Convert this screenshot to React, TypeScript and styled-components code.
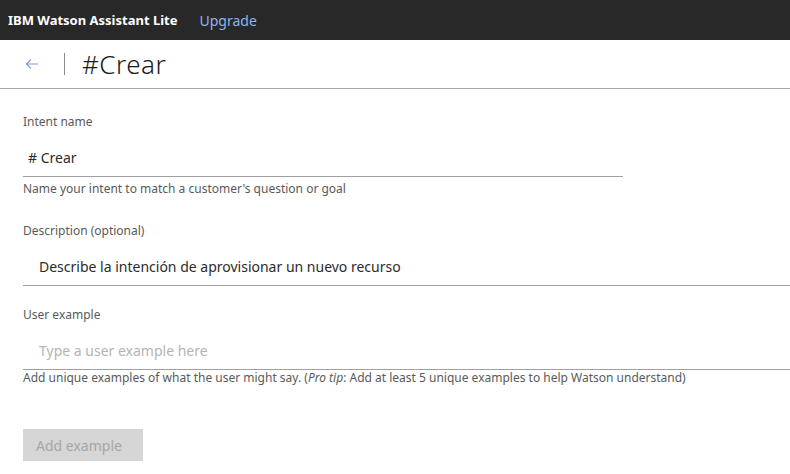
import React from 'react';
import styled, { createGlobalStyle } from 'styled-components';

const GlobalStyle = createGlobalStyle`
  html, body {
    margin: 0;
    padding: 0;
    background: #ffffff;
    font-family: 'Noto Sans', 'Open Sans', sans-serif;
  }
`;

const S = {
  Page: styled.div`
    width: 790px;
    height: 474px;
    overflow: hidden;
    background: #ffffff;
  `,
  TopBar: styled.header`
    height: 40px;
    background: #282828;
    display: flex;
    align-items: center;
    padding-left: 8px;
    gap: 22px;
  `,
  Brand: styled.span`
    color: #ffffff;
    font-size: 13px;
    font-weight: 700;
  `,
  Upgrade: styled.a`
    color: #8fb4ec;
    font-size: 14px;
    text-decoration: none;
  `,
  TitleRow: styled.div`
    height: 48px;
    display: flex;
    align-items: center;
    border-bottom: 1px solid #a8a8a8;
    padding-left: 23px;
  `,
  BackButton: styled.button`
    border: none;
    background: none;
    padding: 0;
    width: 18px;
    height: 18px;
    display: flex;
    align-items: center;
    justify-content: center;
    cursor: pointer;
  `,
  Divider: styled.span`
    width: 1px;
    height: 22px;
    background: #8c8c8c;
    margin: 0 17px 0 23px;
  `,
  Title: styled.h1`
    margin: 0;
    font-size: 26px;
    font-weight: 300;
    color: #1a1a1a;
    letter-spacing: 0.5px;
  `,
  Form: styled.div`
    padding: 25px 0 0 23px;
    display: flex;
    flex-direction: column;
  `,
  Field: styled.div<{ width?: string; gap?: number }>`
    width: ${({ width }) => width || 'auto'};
    margin-bottom: ${({ gap }) => gap ?? 0}px;
  `,
  Label: styled.div`
    font-size: 12px;
    color: #5a5a5a;
    line-height: 16px;
  `,
  Input: styled.div<{ indent: number; placeholder?: boolean }>`
    height: 37px;
    margin-top: 9px;
    display: flex;
    align-items: center;
    padding-left: ${({ indent }) => indent}px;
    border-bottom: 1px solid #a0a0a0;
    font-size: 14px;
    color: ${({ placeholder }) => (placeholder ? '#b4b4b4' : '#2b2b2b')};
  `,
  Helper: styled.div<{ offset: number }>`
    font-size: 12px;
    color: #5a5a5a;
    line-height: 16px;
    margin-top: ${({ offset }) => offset}px;
    white-space: nowrap;
  `,
  Tip: styled.em`
    font-style: italic;
  `,
  AddButton: styled.button`
    margin-top: 43px;
    width: 120px;
    height: 32px;
    border: none;
    background: #d6d6d6;
    color: #a6a6a6;
    font-family: inherit;
    font-size: 14px;
    text-align: left;
    padding: 0 13px;
  `,
};

const BackArrow = () => (
  <svg width="16" height="16" viewBox="0 0 16 16" fill="none">
    <path d="M14 8H2.5M7 3.5L2.5 8L7 12.5" stroke="#7f9cc8" strokeWidth="1.1" />
  </svg>
);

const App = () => (
  <S.Page>
    <GlobalStyle />
    <S.TopBar>
      <S.Brand>IBM Watson Assistant Lite</S.Brand>
      <S.Upgrade>Upgrade</S.Upgrade>
    </S.TopBar>
    <S.TitleRow>
      <S.BackButton>
        <BackArrow />
      </S.BackButton>
      <S.Divider />
      <S.Title>#Crear</S.Title>
    </S.TitleRow>
    <S.Form>
      <S.Field width="600px" gap={26}>
        <S.Label>Intent name</S.Label>
        <S.Input indent={5}># Crear</S.Input>
        <S.Helper offset={4}>Name your intent to match a customer's question or goal</S.Helper>
      </S.Field>
      <S.Field gap={21}>
        <S.Label>Description (optional)</S.Label>
        <S.Input indent={16}>Describe la intención de aprovisionar un nuevo recurso</S.Input>
      </S.Field>
      <S.Field>
        <S.Label>User example</S.Label>
        <S.Input indent={16} placeholder>
          Type a user example here
        </S.Input>
        <S.Helper offset={0}>
          Add unique examples of what the user might say. (<S.Tip>Pro tip</S.Tip>: Add at least 5
          unique examples to help Watson understand)
        </S.Helper>
      </S.Field>
      <div>
        <S.AddButton disabled>Add example</S.AddButton>
      </div>
    </S.Form>
  </S.Page>
);

export default App;
